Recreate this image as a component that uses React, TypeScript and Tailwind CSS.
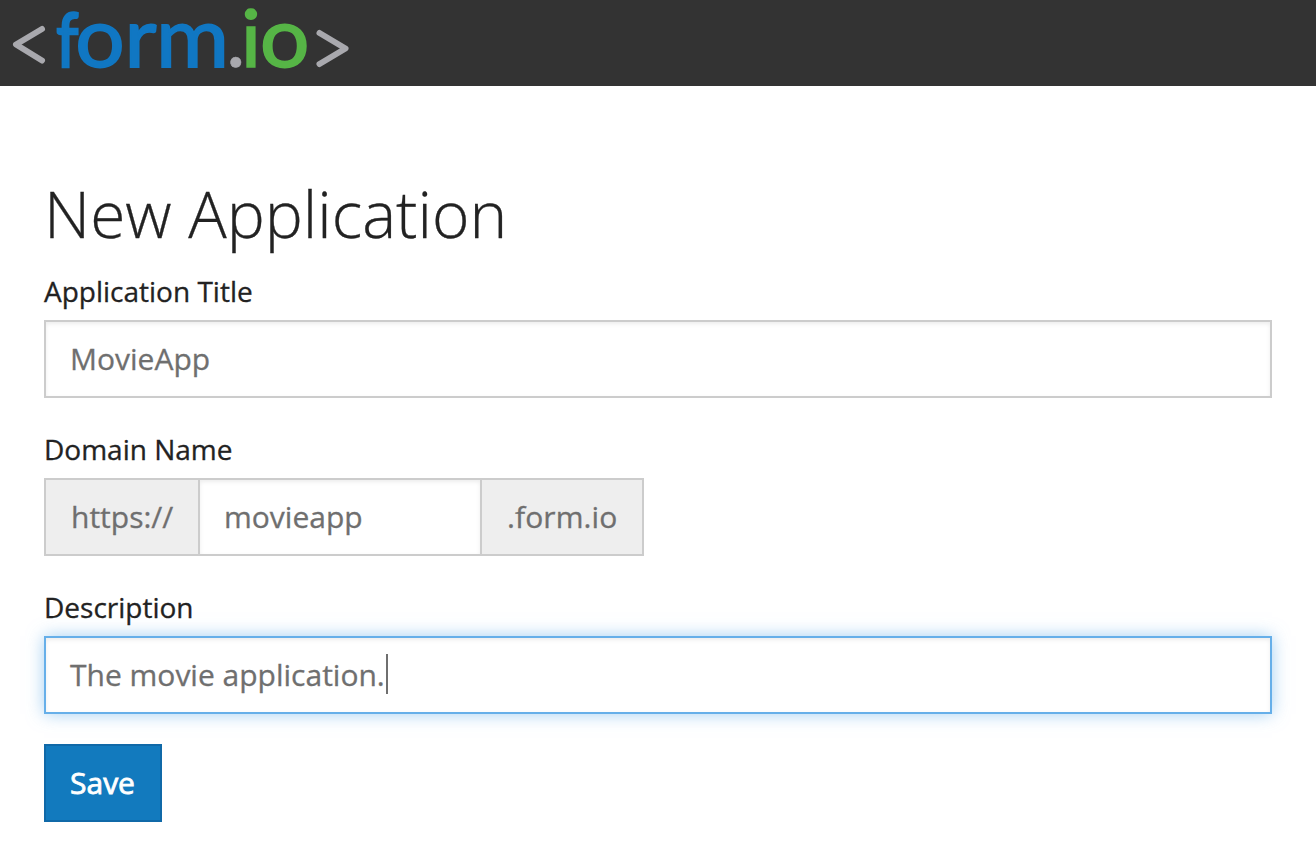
import type { ReactNode } from 'react';

function Logo() {
  return (
    <svg className="block overflow-visible" width="360" height="86" viewBox="0 0 360 86" role="img" aria-label="form.io">
      <path d="M42 29 L16 44.500 L42 60.500" fill="none" stroke="#a9a9ae" strokeWidth="6" strokeLinecap="round" strokeLinejoin="round" />
      <g fontFamily="Lato, sans-serif" fontSize="83" strokeWidth="1.8" fill="#1077c3" stroke="#1077c3">
        <text transform="translate(56.2 67) scale(0.76 0.91)" strokeWidth="3">f</text>
        <text transform="translate(75.200 67) scale(1.050 1)">o</text>
        <text transform="translate(124.500 66.500) scale(1.060 1)">r</text>
        <text transform="translate(156 66.500) scale(1.070 1)">m</text>
        <text x="226" y="67" fill="#a9a9ae" stroke="#a9a9ae" strokeWidth="0.5">.</text>
        <text transform="translate(241 66.500) scale(1 0.950)" fill="#56b546" stroke="#56b546">i</text>
        <text transform="translate(260 67) scale(1.050 1)" fill="#56b546" stroke="#56b546">o</text>
      </g>
      <path d="M319.500 33 L345.500 48.500 L319.500 64" fill="none" stroke="#a9a9ae" strokeWidth="6" strokeLinecap="round" strokeLinejoin="round" />
    </svg>
  );
}

function Field({ label, children }: { label: string; children: ReactNode }) {
  return (
    <div className="mb-[31px] last-of-type:mb-[30px]">
      <div className="mb-[9px] h-[40px] text-[28px] leading-[40px] text-[#222]">{label}</div>
      {children}
    </div>
  );
}

export default function App() {
  return (
    <div className="h-[852px] overflow-hidden bg-white font-['Open_Sans',sans-serif] text-[30px] leading-[42px] text-[#6f6f6f] [-webkit-text-stroke:0.3px_currentColor]">
      <header className="h-[86px] bg-[#333] [-webkit-text-stroke:0]">
        <Logo />
      </header>
      <main className="px-11 pt-[83px]">
        <h1 className="mb-[12px] h-[90px] text-[64px] leading-[90px] font-light text-[#222]">New Application</h1>
        <Field label="Application Title">
          <div className="flex h-[78px] items-center border-2 border-[#ccc] px-6 shadow-[inset_0_2px_4px_rgba(0,0,0,0.075)]">MovieApp</div>
        </Field>
        <Field label="Domain Name">
          <div className="flex h-[78px] w-[600px] border-2 border-[#ccc]">
            <div className="flex w-[154px] items-center border-r-2 border-[#ccc] bg-[#eee] pl-[25px]">https://</div>
            <div className="flex flex-1 items-center pl-6 shadow-[inset_0_2px_4px_rgba(0,0,0,0.075)]">movieapp</div>
            <div className="flex w-[162px] items-center border-l-2 border-[#ccc] bg-[#eee] pl-[25px] tracking-[0.1px]">.form.io</div>
          </div>
        </Field>
        <Field label="Description">
          <div className="flex h-[78px] items-center border-2 border-[#66afe9] px-6 shadow-[inset_0_2px_4px_rgba(0,0,0,0.075),0_0_16px_rgba(102,175,233,0.6)]">
            The movie application.
            <span className="mb-[2px] ml-px h-10 w-[2px] bg-[#6f6f6f]" />
          </div>
        </Field>
        <button className="block h-[78px] w-[118px] border-2 border-[#1069a8] bg-[#127abe] pr-px text-white [-webkit-text-stroke:0.8px_currentColor]">Save</button>
      </main>
    </div>
  );
}
